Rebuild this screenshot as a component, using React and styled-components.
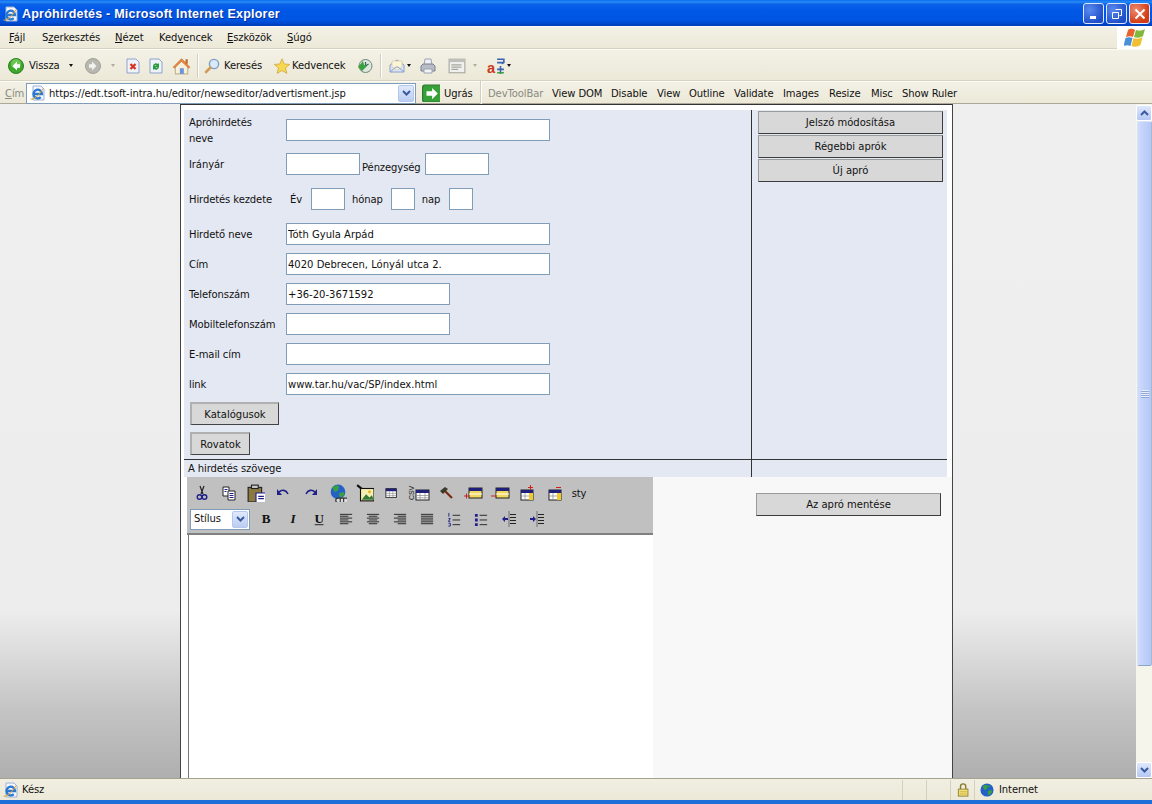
import React from "react";
import styled, { createGlobalStyle } from "styled-components";

const Global = createGlobalStyle`
  html, body { margin: 0; padding: 0; background: #ece9d8; overflow: hidden; }
  * { box-sizing: border-box; }
`;
const UI = `"DejaVu Sans", sans-serif`;

const Win = styled.div`
  width: 1152px; height: 804px; display: flex; flex-direction: column; overflow: hidden;
  font: 10px/12px ${UI}; color: #111; letter-spacing: -0.1px;
`;
const TitleBar = styled.div`
  height: 26px; flex: none; display: flex; align-items: center; padding: 1px 2px 0 3px;
  background: linear-gradient(#0a6cf0 0, #2a8cf5 2px, #0b62e8 4px, #0058e6 10px, #0055e2 20px, #0049d0 23px, #003cb8 26px);
`;
const TitleText = styled.div`
  font: bold 12.5px/16px "Liberation Sans", sans-serif; letter-spacing: 0.22px; color: #fff; flex: 1; margin-left: 3px;
  text-shadow: 1px 1px 0 #0a2f9a;
`;
const Caption = styled.div`
  width: 21px; height: 21px; border: 1px solid #dfe8ff; border-radius: 3px; margin-left: 2px; flex: none;
  display: flex; align-items: center; justify-content: center;
  background: ${p => p.$close ? "radial-gradient(circle at 30% 30%, #ee8a70, #d23c14 70%)" : "radial-gradient(circle at 30% 30%, #5a8aee, #1f4fc8 75%)"};
`;
const Chrome = styled.div`
  flex: none; background: linear-gradient(#f3f1e6, #ece9d8); display: flex; align-items: center;
  border-bottom: 1px solid #d6d3c2; border-top: 1px solid #fbfaf4;
`;
const MenuBar = styled(Chrome)` height: 23px; padding-left: 9px; `;
const MenuItem = styled.span` width: ${p => p.$w}px; flex: none; `;
const FlagBox = styled.div`
  margin-left: auto; width: 35px; height: 23px; background: #fff; display: flex; align-items: center; justify-content: center;
  padding-left: 2px;
`;
const ToolBar = styled(Chrome)` height: 32px; padding: 1px 0 0 8px; `;
const AddrBar = styled(Chrome)` height: 23px; padding: 1px 0 0 5px; border-bottom: 1px solid #aca899; `;
const Slot = styled.div`
  flex: none; width: ${p => p.$w}px; display: flex; align-items: center; justify-content: ${p => p.$left ? "flex-start" : "center"};
  color: ${p => p.$dim ? "#8a8a80" : "inherit"}; padding-top: ${p => p.$text ? 2 : 0}px;
`;
const Divider = styled.div` flex: none; width: 1px; height: 24px; background: #d2cfbd; box-shadow: 1px 0 0 #fff; `;
const Arrow = styled.i`
  display: block; width: 0; height: 0; border-left: 2.5px solid transparent; border-right: 2.5px solid transparent;
  border-top: 3px solid ${p => p.$c || "#111"};
`;
const AddrInput = styled.div`
  width: 390px; height: 21px; margin-left: 5px; margin-right: 6px; background: #fff; border: 1px solid #7f9db9; flex: none;
  display: flex; align-items: center; padding: 0 1px 0 3px; gap: 3px; white-space: nowrap;
`;
const AddrText = styled.span` flex: 1; letter-spacing: -0.05px; padding-top: 2px; `;
const Combo = styled.div`
  width: 16px; height: 17px; border: 1px solid #b4c8ef; border-radius: 2px;
  background: linear-gradient(#e0e9fb, #bccdf2); display: flex; align-items: center; justify-content: center;
`;
const Main = styled.div` flex: 1; min-height: 0; display: flex; `;
const Viewport = styled.div`
  flex: 1; min-width: 0; display: flex; padding-left: 180px;
  background: linear-gradient(#efefef 0, #ededed 75%, #e0e0e0 80%, #c4c4c4 90%, #afafaf 100%);
`;
const Page = styled.div`
  width: 773px; flex: none; display: flex; flex-direction: column; background: #fff;
  border-left: 1px solid #444; border-right: 1px solid #444; border-top: 1px solid #333; padding-top: 5px;
`;
const Panel = styled.div`
  margin: 0 5px 0 3px; background: #e4e8f2; display: grid; grid-template-columns: 567px 1px 1fr; height: 350px;
  border-bottom: 1px solid #333;
`;
const FormCol = styled.div` padding: 9px 0 0 5px; display: flex; flex-direction: column; `;
const VLine = styled.div` background: #333; `;
const SideCol = styled.div` padding: 1px 4px 0 6px; display: flex; flex-direction: column; gap: 1px; `;
const Row = styled.div`
  display: flex; align-items: center; height: ${p => p.$h || 22}px; margin-bottom: ${p => p.$mb ?? 8}px; flex: none;
`;
const Label = styled.label`
  width: 97px; flex: none; line-height: 16px; padding: 2px ${p => p.$wrap ? 20 : 0}px 0 0;
  white-space: ${p => p.$wrap ? "normal" : "nowrap"};
`;
const Inline = styled.span` margin: 0 ${p => p.$r || 0}px 0 ${p => p.$l || 0}px; padding-top: ${p => p.$t ?? 2}px; `;
const Field = styled.input`
  height: 22px; width: ${p => p.$w}px; flex: none; border: 1px solid #7f9db9; background: #fff; padding: 0 1px;
  font: 10px ${UI}; color: #111; margin: 0; outline: none; display: block; border-radius: 0;
`;
const Btn = styled.button`
  display: block; flex: none; margin: 0; padding: 0; background: #d8d8d8; font: 10px ${UI}; color: #111; border-radius: 0;
  border: 1px solid; border-color: #9a9a9a #3c3c3c #3c3c3c #9a9a9a;
  height: 23px; width: ${p => p.$w ? p.$w + "px" : "100%"};
`;
const SmallBtn = styled(Btn)`
  margin: 0 0 ${p => p.$mb}px 1px; border-width: 2px 1px 1px 2px; border-color: #b0b0b0 #444 #444 #b0b0b0;
`;
const CaptionRow = styled.div`
  margin: 0 5px 0 3px; background: #e4e8f2; height: 17px; display: grid; grid-template-columns: 567px 1px 1fr; flex: none;
  line-height: 18px;
`;
const CaptionText = styled.div` padding-left: 4px; `;
const Lower = styled.div` flex: 1; min-height: 0; display: flex; `;
const Editor = styled.div` width: 466px; margin-left: 6px; flex: none; display: flex; flex-direction: column; `;
const EdBar = styled.div`
  height: 58px; background: #c0c0c0; flex: none; border-bottom: 2px solid #808080; padding: 3px 0 0 1px;
  display: flex; flex-direction: column;
`;
const EdRow = styled.div` height: ${p => p.$h}px; display: flex; align-items: center; padding-left: ${p => p.$l || 0}px; `;
const EdSlot = styled.div` width: ${p => p.$w || 27}px; flex: none; display: flex; justify-content: center; align-items: center; font: 10px ${UI}; `;
const StyleSelect = styled.div`
  width: 60px; height: 21px; background: #fff; border: 1px solid #7f9db9; display: flex; align-items: center; padding: 0 1px 0 3px; flex: none;
  justify-content: space-between;
`;
const EdBody = styled.div` flex: 1; background: #fff; border-left: 1px solid #777; margin: 0 1px 0 1px; `;
const SaveCol = styled.div` flex: 1; background: #f8f8f8; padding: 16px 0 0 103px; `;
const Scrollbar = styled.div` width: 16px; flex: none; background: #f6f5ec; display: flex; flex-direction: column; padding-top: 1px; `;
const ScrollBtn = styled.div`
  height: 16px; flex: none; border: 1px solid #fff; border-radius: 2px; background: linear-gradient(#dfe8fc, #b4c8f4);
  display: flex; align-items: center; justify-content: center;
`;
const Thumb = styled.div`
  height: 545px; flex: none; background: linear-gradient(90deg, #cfdcfb, #bfd0fb 50%, #b4c8f8); border: 1px solid #d8e2fb;
  border-right: 1px solid #a7b8cf; border-bottom: 1px solid #8da3c7; border-radius: 2px; display: flex; align-items: center; justify-content: center; margin-left: 1px;
`;
const Grip = styled.div`
  width: 8px; height: 8px; background: repeating-linear-gradient(#e9effd 0 1px, #8ea7d8 1px 2px);
`;
const Spacer = styled.div` flex: 1; `;
const StatusBar = styled.div`
  height: 22px; flex: none; background: linear-gradient(#f1efe2, #ece9d8); border-top: 1px solid #a5a28f; display: flex; align-items: center; padding-left: 3px;
`;
const StatusMain = styled.div` width: 899px; flex: none; display: flex; align-items: center; gap: 3px; `;
const StatusCell = styled.div`
  width: ${p => p.$w}px; flex: none; height: 20px; border-left: 1px solid #d3d0bd; display: flex; align-items: center; padding-left: ${p => p.$l || 0}px; gap: 5px;
`;
const BottomEdge = styled.div` height: 4px; flex: none; background: #1f6fd8; `;

const S = ({ w = 16, h, children, vb = "0 0 16 16" }) => (
  <svg width={w} height={h || w} viewBox={vb} style={{ display: "block", flex: "none" }}>{children}</svg>
);

const IE = ({ w = 16 }) => (
  <S w={w}>
    <path d="M3 1h8l3 3v11H3z" fill="#f4f6fc" stroke="#9db2d4" />
    <path d="M3.500 9h8.500a4.300 4.300 0 1 0-1.300 3.100" fill="none" stroke="#2a78d0" strokeWidth="2.300" />
    <path d="M0.500 14c3 1.500 9-4 12.500-10.500" stroke="#e8a020" strokeWidth="1" fill="none" />
  </S>
);
const Back = () => (
  <S>
    <circle cx="8" cy="8" r="7.5" fill="#3ea82c" stroke="#2a7d20" />
    <circle cx="8" cy="6" r="5" fill="#8ad86e" opacity=".6" />
    <path d="M9 3.500 4.500 8 9 12.500V9.800h3V6.200H9z" fill="#fff" />
  </S>
);
const Fwd = () => (
  <S>
    <circle cx="8" cy="8" r="7.5" fill="#b8b8b0" stroke="#a0a098" />
    <path d="M7 3.500 11.500 8 7 12.500V9.800H4V6.200h3z" fill="#f2f2ee" />
  </S>
);
const Stop = () => (
  <S>
    <path d="M2 1h9l3 3v11H2z" fill="#eef2fb" stroke="#8fa3c8" />
    <path d="M5.500 6 10.500 11M10.500 6 5.500 11" stroke="#d8301c" strokeWidth="2.200" />
  </S>
);
const Refresh = () => (
  <S>
    <path d="M2 1h9l3 3v11H2z" fill="#eef2fb" stroke="#8fa3c8" />
    <path d="M5 8a3 3 0 0 1 5-2l1-1v4H7l1.500-1.300A1.600 1.600 0 0 0 6.300 8z" fill="#2a9a3a" />
    <path d="M11 9a3 3 0 0 1-5 2l-1 1V8h4l-1.500 1.300A1.600 1.600 0 0 0 9.700 9z" fill="#2a9a3a" />
  </S>
);
const Home = () => (
  <S w={18}>
    <path d="M3 8v7h11V8L8.500 2z" fill="#f6f0dc" stroke="#c4b48e" />
    <path d="M1 9 8.500 1.500 16 9l-1 1-6.500-6L2 10z" fill="#e88a44" stroke="#c06a28" strokeWidth=".5" />
    <rect x="7" y="10" width="3.500" height="5" fill="#6a94d8" />
    <rect x="12" y="2" width="2" height="4" fill="#c06a28" />
  </S>
);
const Search = () => (
  <S>
    <circle cx="10" cy="6" r="4.600" fill="#d8eaf8" stroke="#7f9dc0" strokeWidth="1.400" />
    <path d="M6.500 9.500 2 14" stroke="#d09a58" strokeWidth="2.600" strokeLinecap="round" />
  </S>
);
const Star = () => (
  <S>
    <path d="M8 .8 10.200 6l5.500.4-4.200 3.600 1.400 5.400L8 12.500l-4.900 2.900L4.500 10 .3 6.400 5.800 6z" fill="#f8d850" stroke="#c8a030" strokeWidth=".7" />
  </S>
);
const History = () => (
  <S>
    <circle cx="8.500" cy="8" r="6.500" fill="#dfe6e0" stroke="#6f8878" />
    <path d="M8.500 4v4l3-2" stroke="#2a6a50" fill="none" strokeWidth="1.200" />
    <path d="M1 9 6 3l1 4 3 1-5 5z" fill="#3aa040" />
  </S>
);
const Mail = () => (
  <S>
    <path d="M1 7 8 2l7 5v7H1z" fill="#dbe6f6" stroke="#8aa0c8" />
    <path d="M3 3h10v6l-5 3-5-3z" fill="#fbf4d8" stroke="#c8b880" strokeWidth=".5" />
    <path d="M1 14 7 9h2l6 5" fill="none" stroke="#8aa0c8" />
  </S>
);
const Printer = () => (
  <S>
    <path d="M5 1h6l1 6H4z" fill="#eff1f4" stroke="#9aa4b4" />
    <path d="M1 8l2-2h10l2 2v5H1z" fill="#b8bcc4" stroke="#7a8090" />
    <path d="M4 11h8v4H4z" fill="#f4f4f4" stroke="#9aa4b4" />
  </S>
);
const Edit = () => (
  <S w={18}>
    <rect x="1" y="2" width="14" height="12" fill="#f0f0ee" stroke="#a8a8a0" />
    <rect x="1" y="2" width="14" height="2.500" fill="#c0c0ba" />
    <path d="M3 7h9M3 9h9M3 11h6" stroke="#a8a8a0" />
  </S>
);
const Trans = () => (
  <S w={18}>
    <text x="0" y="14" fontFamily="Liberation Sans" fontWeight="bold" fontSize="13" fill="#c83a20">a</text>
    <path d="M9 2h6v3l-2 1M9 5h6M12 8v7M9 11h6" stroke="#3a62b0" strokeWidth="1.400" fill="none" />
    <path d="M9 14h6" stroke="#3aa040" strokeWidth="1.400" />
  </S>
);
const Go = () => (
  <S w={18}>
    <rect x=".5" y="1" width="17" height="15" rx="2" fill="#38a038" stroke="#2a7a2a" />
    <path d="M9 3.500 14 8.500 9 13.500V10.500H4V6.500h5z" fill="#fff" />
  </S>
);
const Flag = () => (
  <S w={24} vb="0 0 24 24">
    <path d="M4 4c3-2 5-1 7 0l-2 7c-2-1-4-1-7 0z" fill="#e8622c" />
    <path d="M12 4c3 1 5 1 9-1l-2 7c-3 2-6 2-9 1z" fill="#7fb83c" />
    <path d="M1.500 12c3-1 5-1 7 0l-2 8c-2-1-4-1-7 0z" fill="#4a90d8" />
    <path d="M9.500 12c3 1 6 1 9-1l-2 8c-3 2-6 2-9 1z" fill="#f0c030" />
  </S>
);
const Globe = ({ w = 14 }) => (
  <S w={w}>
    <circle cx="8" cy="8" r="7.500" fill="#2460c8" />
    <path d="M3 4c2-2 5-2 6-1L8 7 5 8zM9 9l4-1 1 2-3 4-2-1z" fill="#38a040" />
    <path d="M9 2l3 2-2 1z" fill="#38a040" />
  </S>
);
const Lock = () => (
  <S w={14}>
    <path d="M4 7V4a3 3 0 0 1 6 0v3" fill="none" stroke="#8a7a30" strokeWidth="1.600" />
    <rect x="1.500" y="7" width="11" height="8" fill="#f4e078" stroke="#8a7a30" />
    <path d="M3 10h8M3 12.500h8" stroke="#c8b040" />
  </S>
);
const Chev = ({ up, c = "#3a5aa0" }) => (
  <svg width="9" height="6" viewBox="0 0 9 6" style={{ display: "block" }}>
    <path d={up ? "M1 5 4.500 1.500 8 5" : "M1 1 4.500 4.500 8 1"} fill="none" stroke={c} strokeWidth="2" />
  </svg>
);

/* editor icons */
const Cut = () => (
  <S>
    <path d="M6 1l3 8M10 1 7 9" stroke="#222" strokeWidth="1.200" />
    <circle cx="5.500" cy="12" r="2.300" fill="none" stroke="#20208a" strokeWidth="1.400" />
    <circle cx="10.500" cy="12" r="2.300" fill="none" stroke="#20208a" strokeWidth="1.400" />
  </S>
);
const Copy = () => (
  <S>
    <path d="M2 2h6v9H2z" fill="#fff" stroke="#222" />
    <path d="M7 6h7v9H7z" fill="#fff" stroke="#222" />
    <path d="M3.500 4.500h3M3.500 6.500h2M8.500 8.500h4M8.500 10.500h4M8.500 12.500h4" stroke="#20208a" />
  </S>
);
const Paste = () => (
  <S w={18}>
    <rect x="1" y="3" width="12" height="13" fill="#8a7a40" stroke="#222" />
    <rect x="4" y="1" width="6" height="3" fill="#ccc" stroke="#222" />
    <path d="M8 8h9v9H8z" fill="#fff" stroke="#20208a" />
    <path d="M10 11h5M10 13h5" stroke="#20208a" />
  </S>
);
const Undo = ({ flip }) => (
  <S>
    <g transform={flip ? "translate(16 0) scale(-1 1)" : undefined}>
      <path d="M4 7c3-3 7-2 9 2" fill="none" stroke="#20208a" strokeWidth="1.600" />
      <path d="M2 4v6h5z" fill="#20208a" />
    </g>
  </S>
);
const Net = () => (
  <S w={18}>
    <circle cx="8" cy="7" r="6.500" fill="#2460c8" />
    <path d="M3 3c2-2 5-2 6-1L8 6 5 7zM9 8l4-1 1 2-3 3-2-1z" fill="#38a040" />
    <path d="M6 14.500a2 2 0 0 1 2-2h8a2 2 0 0 1 0 4H8a2 2 0 0 1-2-2z" fill="#ddd" stroke="#333" />
    <path d="M10 12.500v4M13 12.500v4" stroke="#333" />
  </S>
);
const Pic = () => (
  <S w={18}>
    <path d="M1 1l5 4" stroke="#111" strokeWidth="2" />
    <rect x="4" y="4" width="12" height="11" fill="#f6f0b0" stroke="#111" />
    <path d="M5 14l4-5 3 3 2-2 2 4z" fill="#3a7a3a" />
    <circle cx="12" cy="7" r="1.300" fill="#e8b020" />
  </S>
);
const Table = () => (
  <S w={14}>
    <rect x="1" y="3" width="12" height="10" fill="#fff" stroke="#222" />
    <rect x="1" y="3" width="12" height="3" fill="#20207a" />
    <path d="M1 8.500h12M1 10.800h12M5 6v7M9 6v7" stroke="#888" strokeWidth=".7" />
  </S>
);
const Csv = () => (
  <S w={22} h={18} vb="0 0 22 18">
    <text transform="translate(6 16) rotate(-90)" fontFamily="Liberation Sans" fontSize="7" fill="#222">CSV</text>
    <rect x="8" y="6" width="13" height="10" fill="#fff" stroke="#222" />
    <rect x="8" y="6" width="13" height="3" fill="#20207a" />
    <path d="M8 11.500h13M8 13.800h13M12 9v7M17 9v7" stroke="#888" strokeWidth=".7" />
  </S>
);
const Hammer = () => (
  <S>
    <path d="M7 6l7 7" stroke="#7a2a10" strokeWidth="2.200" />
    <path d="M2 6l5-4 3 2-5 5z" fill="#3a3a28" />
  </S>
);
const RowOp = ({ plus }) => (
  <S w={20} h={16} vb="0 0 20 16">
    <rect x="6" y="3" width="13" height="10" fill="#f0d860" stroke="#222" />
    <rect x="6" y="3" width="13" height="3" fill="#20207a" />
    <path d="M6 9h13" stroke="#fff" />
    <path d="M1 11h5" stroke="#d02020" />
    {plus && <path d="M3.500 8.500v5" stroke="#d02020" />}
  </S>
);
const ColOp = ({ plus }) => (
  <S w={16}>
    <rect x="2" y="5" width="12" height="10" fill="#fff" stroke="#222" />
    <rect x="2" y="5" width="12" height="3" fill="#20207a" />
    <rect x="10" y="8" width="4" height="7" fill="#f0c830" />
    <path d="M2 11h8M6 8v7" stroke="#888" strokeWidth=".7" />
    <path d="M9 2.500h5" stroke="#d02020" />
    {plus && <path d="M11.500 0v5" stroke="#d02020" />}
  </S>
);
const Fmt = ({ ch, italic, under }) => (
  <S w={14}>
    <text x="7" y="12" textAnchor="middle" fontFamily="Liberation Serif" fontWeight="bold" fontStyle={italic ? "italic" : "normal"} fontSize="15" fill="#111">{ch}</text>
    {under && <path d="M2 14.500h10" stroke="#111" />}
  </S>
);
const Lines = ({ rows }) => (
  <S w={15}>
    {rows.map((r, i) => <path key={i} d={`M${r[0]} ${2.500 + i * 2}H${r[1]}`} stroke="#222" />)}
  </S>
);
const Ol = () => (
  <S w={15}>
    <path d="M2 1v4M1.500 7h2l-2 3h2M1.500 12h2v3h-2" stroke="#20208a" fill="none" />
    <path d="M6 3.500h8M6 8.500h8M6 13.500h8" stroke="#222" />
  </S>
);
const Ul = () => (
  <S w={15}>
    <path d="M1 2h3v3H1zM1 7h3v3H1zM1 12h3v3H1z" fill="#20208a" />
    <path d="M6 3.500h8M6 8.500h8M6 13.500h8" stroke="#222" />
  </S>
);
const Dent = ({ out }) => (
  <S>
    <path d="M8 .500v15" stroke="#222" strokeDasharray="1 1" />
    <path d="M9 3.500h6M9 6.500h6M9 9.500h6M9 12.500h6" stroke="#222" strokeWidth="1.200" />
    <path d={out ? "M1 8l3-3v2h3v2H4v2z" : "M7 8 4 5v2H1v2h3v2z"} fill="#20208a" />
  </S>
);

const ltr = [[1, 14], [1, 10], [1, 14], [1, 10], [1, 14], [1, 10]];
const ctr = [[1, 14], [3, 12], [1, 14], [3, 12], [1, 14], [3, 12]];
const rgt = [[1, 14], [5, 14], [1, 14], [5, 14], [1, 14], [5, 14]];
const jst = [[1, 14], [1, 14], [1, 14], [1, 14], [1, 14], [1, 14]];

const addrLinks = [
  ["View DOM", 59], ["Disable", 46], ["View", 32], ["Outline", 45], ["Validate", 49],
  ["Images", 46], ["Resize", 42], ["Misc", 31], ["Show Ruler", 60],
];

export default function App() {
  return (
    <Win>
      <Global />
      <TitleBar>
        <IE />
        <TitleText>Apróhirdetés - Microsoft Internet Explorer</TitleText>
        <Caption>
          <svg width="12" height="12" viewBox="0 0 12 12"><rect x="2" y="8" width="6" height="3" fill="#fff" /></svg>
        </Caption>
        <Caption>
          <svg width="12" height="12" viewBox="0 0 12 12"><path d="M4.500 1.500h6v6h-2M1.500 4.500h6v6h-6z" fill="none" stroke="#fff" /></svg>
        </Caption>
        <Caption $close>
          <svg width="12" height="12" viewBox="0 0 12 12"><path d="M1.500 1.500l9 9M10.500 1.500l-9 9" stroke="#fff" strokeWidth="2" /></svg>
        </Caption>
      </TitleBar>
      <MenuBar>
        <MenuItem $w={33}><u>F</u>ájl</MenuItem>
        <MenuItem $w={73}>S<u>z</u>erkesztés</MenuItem>
        <MenuItem $w={44}><u>N</u>ézet</MenuItem>
        <MenuItem $w={68}>Ked<u>v</u>encek</MenuItem>
        <MenuItem $w={60}><u>E</u>szközök</MenuItem>
        <MenuItem $w={40}><u>S</u>úgó</MenuItem>
        <FlagBox><Flag /></FlagBox>
      </MenuBar>
      <ToolBar>
        <Slot $w={21} $left><Back /></Slot>
        <Slot $w={36} $left>Vissza</Slot>
        <Slot $w={12}><Arrow /></Slot>
        <Slot $w={8} />
        <Slot $w={16}><Fwd /></Slot>
        <Slot $w={24}><Arrow $c="#b0ae9e" /></Slot>
        <Slot $w={16}><Stop /></Slot>
        <Slot $w={7} />
        <Slot $w={16}><Refresh /></Slot>
        <Slot $w={8} />
        <Slot $w={18}><Home /></Slot>
        <Slot $w={7} />
        <Divider />
        <Slot $w={6} />
        <Slot $w={20} $left><Search /></Slot>
        <Slot $w={50} $left>Keresés</Slot>
        <Slot $w={18} $left><Star /></Slot>
        <Slot $w={65} $left>Kedvencek</Slot>
        <Slot $w={16}><History /></Slot>
        <Slot $w={7} />
        <Divider />
        <Slot $w={8} />
        <Slot $w={17} $left><Mail /></Slot>
        <Slot $w={6}><Arrow /></Slot>
        <Slot $w={8} />
        <Slot $w={18} $left><Printer /></Slot>
        <Slot $w={10} />
        <Slot $w={22} $left><Edit /></Slot>
        <Slot $w={9}><Arrow $c="#b0ae9e" /></Slot>
        <Slot $w={8} />
        <Slot $w={19} $left><Trans /></Slot>
        <Slot $w={6}><Arrow /></Slot>
      </ToolBar>
      <AddrBar>
        <Slot $w={16} $left $dim $text><u>C</u>ím</Slot>
        <AddrInput>
          <IE />
          <AddrText>https://edt.tsoft-intra.hu/editor/newseditor/advertisment.jsp</AddrText>
          <Combo><Chev /></Combo>
        </AddrInput>
        <Slot $w={22} $left><Go /></Slot>
        <Slot $w={36} $left $text>Ugrás</Slot>
        <Divider />
        <Slot $w={7} />
        <Slot $w={64} $left $dim $text>DevToolBar</Slot>
        {addrLinks.map(([t, w]) => <Slot key={t} $w={w} $left $text>{t}</Slot>)}
      </AddrBar>
      <Main>
        <Viewport>
          <Page>
            <Panel>
              <FormCol>
                <Row $mb={12}>
                  <Label $wrap>Apróhirdetés neve</Label>
                  <Field $w={264} />
                </Row>
                <Row $mb={13}>
                  <Label>Irányár</Label>
                  <Field $w={74} />
                  <Inline $l={2} $r={4} $t={8}>Pénzegység</Inline>
                  <Field $w={64} />
                </Row>
                <Row $mb={13}>
                  <Label>Hirdetés kezdete</Label>
                  <Inline $l={4} $r={9}>Év</Inline>
                  <Field $w={34} />
                  <Inline $l={7} $r={8}>hónap</Inline>
                  <Field $w={24} />
                  <Inline $l={7} $r={9}>nap</Inline>
                  <Field $w={24} />
                </Row>
                <Row>
                  <Label>Hirdető neve</Label>
                  <Field $w={264} defaultValue="Tóth Gyula Árpád" />
                </Row>
                <Row>
                  <Label>Cím</Label>
                  <Field $w={264} defaultValue="4020 Debrecen, Lónyál utca 2." />
                </Row>
                <Row>
                  <Label>Telefonszám</Label>
                  <Field $w={164} defaultValue="+36-20-3671592" />
                </Row>
                <Row>
                  <Label>Mobiltelefonszám</Label>
                  <Field $w={164} />
                </Row>
                <Row>
                  <Label>E-mail cím</Label>
                  <Field $w={264} />
                </Row>
                <Row $mb={7}>
                  <Label>link</Label>
                  <Field $w={264} defaultValue="www.tar.hu/vac/SP/index.html" />
                </Row>
                <SmallBtn $w={89} $mb={7}>Katalógusok</SmallBtn>
                <SmallBtn $w={60} $mb={0}>Rovatok</SmallBtn>
              </FormCol>
              <VLine />
              <SideCol>
                <Btn>Jelszó módosítása</Btn>
                <Btn>Régebbi aprók</Btn>
                <Btn>Új apró</Btn>
              </SideCol>
            </Panel>
            <CaptionRow>
              <CaptionText>A hirdetés szövege</CaptionText>
              <VLine />
            </CaptionRow>
            <Lower>
              <Editor>
                <EdBar>
                  <EdRow $h={26}>
                    <EdSlot><Cut /></EdSlot>
                    <EdSlot><Copy /></EdSlot>
                    <EdSlot><Paste /></EdSlot>
                    <EdSlot $w={28}><Undo /></EdSlot>
                    <EdSlot $w={28}><Undo flip /></EdSlot>
                    <EdSlot $w={26}><Net /></EdSlot>
                    <EdSlot><Pic /></EdSlot>
                    <EdSlot><Table /></EdSlot>
                    <EdSlot><Csv /></EdSlot>
                    <EdSlot><Hammer /></EdSlot>
                    <EdSlot><RowOp plus /></EdSlot>
                    <EdSlot><RowOp /></EdSlot>
                    <EdSlot $w={28}><ColOp plus /></EdSlot>
                    <EdSlot><ColOp /></EdSlot>
                    <EdSlot $w={22}>sty</EdSlot>
                  </EdRow>
                  <EdRow $h={26} $l={2}>
                    <StyleSelect>Stílus<Combo><Chev /></Combo></StyleSelect>
                    <EdSlot $w={3} />
                    <EdSlot><Fmt ch="B" /></EdSlot>
                    <EdSlot><Fmt ch="I" italic /></EdSlot>
                    <EdSlot $w={26}><Fmt ch="U" under /></EdSlot>
                    <EdSlot><Lines rows={ltr} /></EdSlot>
                    <EdSlot><Lines rows={ctr} /></EdSlot>
                    <EdSlot><Lines rows={rgt} /></EdSlot>
                    <EdSlot><Lines rows={jst} /></EdSlot>
                    <EdSlot><Ol /></EdSlot>
                    <EdSlot><Ul /></EdSlot>
                    <EdSlot $w={28}><Dent out /></EdSlot>
                    <EdSlot><Dent /></EdSlot>
                  </EdRow>
                </EdBar>
                <EdBody />
              </Editor>
              <SaveCol><Btn $w={185}>Az apró mentése</Btn></SaveCol>
            </Lower>
          </Page>
        </Viewport>
        <Scrollbar>
          <ScrollBtn><Chev up /></ScrollBtn>
          <Thumb><Grip /></Thumb>
          <Spacer />
          <ScrollBtn><Chev /></ScrollBtn>
        </Scrollbar>
      </Main>
      <StatusBar>
        <StatusMain><IE /><span>Kész</span></StatusMain>
        <StatusCell $w={24} />
        <StatusCell $w={24} />
        <StatusCell $w={24} $l={6}><Lock /></StatusCell>
        <StatusCell $w={177} $l={5}><Globe /><span>Internet</span></StatusCell>
      </StatusBar>
      <BottomEdge />
    </Win>
  );
}
